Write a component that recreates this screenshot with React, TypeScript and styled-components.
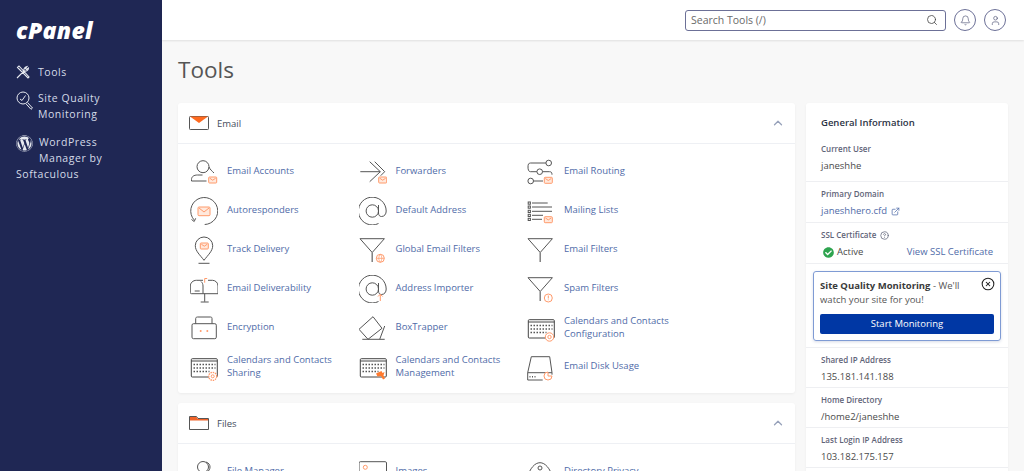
import React from 'react';
import styled, { createGlobalStyle } from 'styled-components';
import { Search, Bell, User, ChevronUp, ExternalLink, CircleHelp, CircleX } from 'lucide-react';
import { FaWordpress, FaCheckCircle } from 'react-icons/fa';

const Global = createGlobalStyle`
  html, body { margin: 0; padding: 0; height: 471px; overflow: hidden; }
  body { font-family: "Open Sans", "Liberation Sans", sans-serif; background: #f8f8f8; }
  * { box-sizing: border-box; }
`;

const Shell = styled.div`
  display: flex;
  width: 1024px;
  height: 471px;
  overflow: hidden;
`;

const Sidebar = styled.aside`
  flex: 0 0 162px;
  background: #1f2754;
  padding: 17px 16px 0;
  color: #d5dbe8;
`;

const Logo = styled.div`
  color: #fff;
  font-style: italic;
  font-weight: 800;
  font-size: 23px;
  line-height: 26px;
  letter-spacing: 0.3px;
  margin-bottom: 21px;
`;

const NavItem = styled.div<{ $gap: number }>`
  font-size: 10.5px;
  line-height: 16.2px;
  letter-spacing: 0.55px;
  margin-bottom: ${p => p.$gap}px;
  &::after { content: ""; display: block; clear: both; }
`;

const NavIcon = styled.span<{ $w: number; $h: number }>`
  float: left;
  width: ${p => p.$w}px;
  height: ${p => p.$h}px;
  padding-top: 1px;
  color: #e6e9f0;
  svg { display: block; }
`;

const Content = styled.div`
  flex: 1;
  min-width: 0;
`;

const TopBar = styled.header`
  height: 40px;
  background: #fff;
  box-shadow: 0 1px 2px rgba(0, 0, 0, 0.1);
  display: flex;
  align-items: center;
  justify-content: flex-end;
  padding-right: 18px;
  gap: 8px;
`;

const SearchBox = styled.div`
  width: 261px;
  height: 21px;
  border: 1px solid #6c7097;
  border-radius: 3px;
  display: flex;
  align-items: center;
  justify-content: space-between;
  padding: 0 7px 0 5px;
  font-size: 10.5px;
  color: #6a6a6a;
  svg { color: #444; }
`;

const RoundButton = styled.div`
  width: 22px;
  height: 22px;
  border: 1px solid #6c7097;
  border-radius: 50%;
  display: flex;
  align-items: center;
  justify-content: center;
  color: #4a4f70;
`;

const PageTitle = styled.h1`
  margin: 0;
  padding: 13px 0 0 16px;
  height: 63px;
  font-size: 22.5px;
  line-height: 34px;
  font-weight: 400;
  color: #555;
`;

const Columns = styled.div`
  display: grid;
  grid-template-columns: 617px 202px;
  column-gap: 11px;
  padding-left: 16px;
`;

const Stack = styled.div`
  display: flex;
  flex-direction: column;
  gap: 10px;
`;

const Card = styled.section`
  background: #fff;
  border-radius: 3px;
  box-shadow: 0 1px 3px rgba(0, 0, 0, 0.05);
`;

const SectionHead = styled.div`
  height: 41px;
  border-bottom: 1px solid #eef0f4;
  display: flex;
  align-items: center;
  padding: 0 10px 0 11px;
  gap: 8px;
  font-size: 9.5px;
  color: #444c5c;
  svg:last-child { margin-left: auto; color: #97a1ba; }
`;

const ToolGrid = styled.div`
  display: grid;
  grid-template-columns: repeat(3, 168.5px);
  grid-auto-rows: 39px;
  padding: 8px 0 7px 12px;
`;

const Tool = styled.a`
  display: flex;
  align-items: center;
  gap: 9px;
  font-size: 9.5px;
  line-height: 12.5px;
  color: #4f6ba8;
  padding-right: 12px;
  svg { flex: 0 0 28px; }
`;

const InfoCard = styled(Card)`
  height: 400px;
`;

const InfoTitle = styled.h2`
  margin: 0;
  padding: 13px 15px 0;
  height: 34px;
  font-size: 9.5px;
  line-height: 14px;
  font-weight: 600;
  color: #2c3345;
`;

const InfoRow = styled.div<{ $h: number }>`
  height: ${p => p.$h}px;
  padding: 0 15px;
  border-bottom: 1.5px solid #eeeff2;
`;

const Label = styled.div`
  display: flex;
  align-items: center;
  gap: 4px;
  font-size: 8px;
  line-height: 12px;
  font-weight: 600;
  color: #5f6478;
  padding-top: 6px;
`;

const Value = styled.div`
  display: flex;
  align-items: center;
  gap: 4px;
  font-size: 9.5px;
  line-height: 14px;
  margin-top: 4px;
  color: #4a4a4a;
`;

const DomainLink = styled(Value)`
  color: #4f6ba8;
`;

const SslLine = styled(Value)`
  justify-content: space-between;
  padding-left: 2px;
  a { color: #4f6ba8; }
  span { display: flex; align-items: center; gap: 3px; }
  svg { color: #2ea44f; }
`;

const PromoWrap = styled.div`
  padding: 7px;
  height: 84px;
  border-bottom: 1.5px solid #eeeff2;
`;

const Promo = styled.div`
  position: relative;
  border: 1px solid #7f9bd4;
  border-radius: 3px;
  height: 70px;
  padding: 7px 6px;
  font-size: 9.5px;
  line-height: 14px;
  color: #555;
  box-shadow: 0 1px 3px rgba(60, 80, 140, 0.2);
  b { font-weight: 700; color: #3a3a3a; }
`;

const CloseIcon = styled.span`
  position: absolute;
  top: 5px;
  right: 5px;
  color: #222;
  line-height: 0;
`;

const PromoButton = styled.div`
  margin-top: 7px;
  height: 20px;
  background: #0037a4;
  border-radius: 2px;
  color: #fff;
  font-size: 9.5px;
  line-height: 20px;
  text-align: center;
`;

const G = '#555';
const O = '#ff9a6b';

const Svg = ({ children }: { children: React.ReactNode }) => (
  <svg width="28" height="28" viewBox="0 0 28 28" fill="none" stroke={G} strokeWidth="1">
    {children}
  </svg>
);

const MiniMail = ({ x, y }: { x: number; y: number }) => (
  <g stroke={O}>
    <rect x={x} y={y} width="8" height="6" rx="0.8" fill="#ffe9dd" />
    <path d={`M${x + 1} ${y + 1.2}l3 2 3-2`} />
  </g>
);

const At = ({ children }: { children?: React.ReactNode }) => (
  <Svg>
    <circle cx="13.3" cy="14" r="6.2" />
    <path d="M19.5 8v8c0 2 1 3.500 3 3.500 3 0 4.700-2.500 4.700-5.500A13.900 13.900 0 1 0 19.500 26.500" />
    {children}
  </Svg>
);

const Funnel = ({ children }: { children?: React.ReactNode }) => (
  <Svg>
    <path d="M1 2.700h24.400L13.200 16.500z" />
    <path d="M13.200 16.500v9.500" strokeWidth="1.400" stroke="#777" />
    {children}
  </Svg>
);

const Calendar = ({ children }: { children?: React.ReactNode }) => (
  <Svg>
    <rect x="1.300" y="5.700" width="26" height="18.300" rx="1" stroke="#444" />
    <path d="M1.300 8h26" stroke="#444" />
    <path d="M3.500 11.500h22M3.500 15h22M3.500 18.500h16" stroke="#555" strokeWidth="1.600" strokeDasharray="1.500 1.500" />
    {children}
  </Svg>
);

const icons: Record<string, React.ReactNode> = {
  accounts: (
    <Svg>
      <circle cx="13" cy="8.700" r="6" />
      <path d="M1.500 23v-1.500c0-3 2.500-4.500 6-4.500h5M19 9c1 2.500 3 4 5 6" />
      <path d="M1.500 23h15" />
      <MiniMail x={18.700} y={19} />
    </Svg>
  ),
  forwarders: (
    <Svg>
      <path d="M1.300 13.700h20M10.700 3.700l10.600 10-10.600 10M15.700 3.700l10 10-4 4" />
      <MiniMail x={19.700} y={19} />
    </Svg>
  ),
  routing: (
    <Svg>
      <circle cx="21.700" cy="5" r="2.800" />
      <circle cx="12.700" cy="13.700" r="2.800" />
      <circle cx="3.700" cy="23" r="2.800" />
      <path d="M18.900 5H3.500C1.500 5 1 6.500 1 9s.5 4.700 2.500 4.700h6.400M15.500 13.700h7c1.500 0 2.500.5 2.500 3M6.500 23h9.500" />
      <MiniMail x={17.300} y={19.300} />
    </Svg>
  ),
  lists: (
    <Svg>
      {[6, 10, 14.300, 18.300, 22.300].map(y => <rect key={y} x="1.200" y={y - 1} width="2.200" height="2.200" />)}
      <path d="M5 6h15.700M5 10h20M5 14.300h20M5 18.300h11M5 22.300h10" />
      <MiniMail x={17.300} y={19.700} />
    </Svg>
  ),
  auto: (
    <Svg>
      <path d="M14.700 27.500A13.500 13.500 0 1 0 4 22.800M1.500 22.500l2.700 2 1.500-3.200" />
      <g stroke={O}>
        <rect x="8" y="10" width="12" height="8.700" rx="1" fill="#ffe9dd" />
        <path d="M9 11l5 4 5-4" />
      </g>
    </Svg>
  ),
  address: <At />,
  track: (
    <Svg>
      <path d="M14 24.300C10 19 5.300 15 5.300 9.700a8.700 8.700 0 0 1 17.400 0C22.700 15 18 19 14 24.300z" />
      <path d="M8.500 27.300h11" />
      <MiniMail x={10.300} y={7} />
    </Svg>
  ),
  globalFilter: (
    <Funnel>
      <g stroke={O}>
        <circle cx="21.300" cy="22.300" r="4" />
        <path d="M17.300 22.300h8M21.300 18.300c-2 2.500-2 5.500 0 8M21.300 18.300c2 2.500 2 5.500 0 8" strokeWidth="0.800" />
      </g>
    </Funnel>
  ),
  filter: <Funnel />,
  deliver: (
    <Svg>
      <path d="M13 18.700H1.500c-.8 0-1.200-.4-1.200-1.200V11c0-3 2.500-5.700 6.200-5.700H13M13 18.700V11c0-2-.8-3.500-2-4.500M18 5.300h4.500c3 0 5.500 2.500 5.500 5.700v7.700H13" />
      <path d="M4.700 16h5M14.700 18.700v8M10.700 27h8" />
      <path d="M14.700 7.700V3.500h2.500" stroke={O} />
    </Svg>
  ),
  importer: (
    <At>
      <path d="M21.300 26v-6.500M19 21.500l2.300-2.300 2.300 2.300" stroke={O} />
    </At>
  ),
  spam: (
    <Funnel>
      <g stroke={O}>
        <circle cx="21.300" cy="23" r="4" />
        <path d="M21.300 20.500v3M21.300 24.500v.7" />
      </g>
    </Funnel>
  ),
  encrypt: (
    <Svg>
      <rect x="2" y="9.700" width="24.300" height="15" rx="1.500" />
      <path d="M5.700 9.700V4.500C5.700 3.500 6.500 3 7.500 3h13c1 0 1.500.5 1.500 1.500v5.200" />
      <circle cx="10.700" cy="17" r="1" fill={O} stroke="none" />
      <circle cx="17.300" cy="17" r="1" fill={O} stroke="none" />
    </Svg>
  ),
  trapper: (
    <Svg>
      <path d="M0 15.300L14 2.700l9 11.600-14 11z" />
      <path d="M3.300 25.300h22.400M25.700 12l-5 13.300" />
    </Svg>
  ),
  calConfig: (
    <Calendar>
      <circle cx="22.500" cy="23" r="4.200" fill="#fff" stroke={O} />
      <circle cx="22.500" cy="23" r="1.700" stroke={O} />
    </Calendar>
  ),
  calShare: (
    <Calendar>
      <circle cx="22.700" cy="23.300" r="4" fill="#fff" stroke={O} strokeDasharray="1.500 0.800" strokeWidth="1.300" />
      <circle cx="22.700" cy="23.300" r="1.500" stroke={O} />
    </Calendar>
  ),
  calManage: (
    <Calendar>
      <path d="M17 20.500l5.500-2.500 1 2 2-1-1 3.500 1.500 3-2 1-2-3.500-3.500.5z" fill="#ff7a2e" stroke="none" />
    </Calendar>
  ),
  disk: (
    <Svg>
      <path d="M4.300 3.700h18.400l2.300 16H.7zM.7 19.700V27h15M25 19.700v2" />
      <path d="M3 24.500v-1.500M5.500 24.500v-1.500M8 24.500v-1.500" />
      <g stroke={O}>
        <path d="M21 19a4 4 0 1 0 4 4h-4z" fill="#fff" />
      </g>
    </Svg>
  ),
  fileManager: (
    <Svg>
      <circle cx="13" cy="9" r="5.500" />
      <path d="M16 4c3 1 4 3 4 5s-1 4-3 5" />
    </Svg>
  ),
  images: (
    <Svg>
      <path d="M0 27V5c0-.8.5-1.300 1.300-1.300h25c.7 0 1.200.5 1.200 1.300v22" />
      <circle cx="6.300" cy="9.300" r="2" stroke={O} />
    </Svg>
  ),
  privacy: (
    <Svg>
      <path d="M0 20C3 10 8 4.700 13 4.700S23 10 26 20" />
      <circle cx="13" cy="10" r="2" />
    </Svg>
  ),
};

const emailTools = [
  ['accounts', 'Email Accounts'], ['forwarders', 'Forwarders'], ['routing', 'Email Routing'],
  ['auto', 'Autoresponders'], ['address', 'Default Address'], ['lists', 'Mailing Lists'],
  ['track', 'Track Delivery'], ['globalFilter', 'Global Email Filters'], ['filter', 'Email Filters'],
  ['deliver', 'Email Deliverability'], ['importer', 'Address Importer'], ['spam', 'Spam Filters'],
  ['encrypt', 'Encryption'], ['trapper', 'BoxTrapper'], ['calConfig', 'Calendars and Contacts Configuration'],
  ['calShare', 'Calendars and Contacts Sharing'], ['calManage', 'Calendars and Contacts Management'], ['disk', 'Email Disk Usage'],
];

const fileTools = [['fileManager', 'File Manager'], ['images', 'Images'], ['privacy', 'Directory Privacy']];

const EmailIcon = () => (
  <svg width="20" height="16" viewBox="0 0 20 16" fill="none">
    <rect x="0.500" y="1.500" width="19" height="13" rx="0.800" stroke="#555" />
    <path d="M1 1.500h18L10 8z" fill="#ff6a1f" />
  </svg>
);

const FolderIcon = () => (
  <svg width="20" height="16" viewBox="0 0 20 16" fill="none">
    <path d="M.5 14.500V1.500h7l1.500 2h10.500v11z" stroke="#555" fill="#fff" />
    <path d="M1 2h6.500L9 4h10v1.500H1z" fill="#f0642a" />
  </svg>
);

const ToolsIcon = () => (
  <svg width="14" height="14" viewBox="0 0 14 14" fill="none" stroke="currentColor" strokeWidth="1.100">
    <path d="M1 13L8 6M8 6c-.5-2 .5-4 3-4.500L9.500 3.500l1 1L12.500 3c0 2.500-2 3.500-4.500 3zM1.500 2.500L3 1l10 11-1 1z" />
  </svg>
);

const QualityIcon = () => (
  <svg width="18" height="19" viewBox="0 0 18 19" fill="none" stroke="currentColor" strokeWidth="1">
    <circle cx="7" cy="7" r="6" />
    <path d="M4 8l2 1.500L9.500 4.500M11.500 11.500l5 5.500-1.500 1.300-5-5.500" />
  </svg>
);

const ToolList = ({ items }: { items: string[][] }) => (
  <ToolGrid>
    {items.map(([icon, label]) => (
      <Tool key={label}>
        {icons[icon]}
        <span>{label}</span>
      </Tool>
    ))}
  </ToolGrid>
);

export default function App() {
  return (
    <Shell>
      <Global />
      <Sidebar>
        <Logo>cPanel</Logo>
        <NavItem $gap={9.800}>
          <NavIcon $w={22} $h={16}><ToolsIcon /></NavIcon>
          Tools
        </NavItem>
        <NavItem $gap={11.600}>
          <NavIcon $w={22} $h={30}><QualityIcon /></NavIcon>
          Site Quality Monitoring
        </NavItem>
        <NavItem $gap={0}>
          <NavIcon $w={23} $h={30}><FaWordpress size={17} /></NavIcon>
          WordPress Manager by Softaculous
        </NavItem>
      </Sidebar>
      <Content>
        <TopBar>
          <SearchBox>
            Search Tools (/)
            <Search size={12} strokeWidth={1.6} />
          </SearchBox>
          <RoundButton><Bell size={11} strokeWidth={1.4} /></RoundButton>
          <RoundButton><User size={11} strokeWidth={1.4} /></RoundButton>
        </TopBar>
        <PageTitle>Tools</PageTitle>
        <Columns>
          <Stack>
            <Card>
              <SectionHead>
                <EmailIcon />
                Email
                <ChevronUp size={14} strokeWidth={2.2} />
              </SectionHead>
              <ToolList items={emailTools} />
            </Card>
            <Card>
              <SectionHead>
                <FolderIcon />
                Files
                <ChevronUp size={14} strokeWidth={2.2} />
              </SectionHead>
              <ToolList items={fileTools} />
            </Card>
          </Stack>
          <InfoCard>
            <InfoTitle>General Information</InfoTitle>
            <InfoRow $h={45}>
              <Label>Current User</Label>
              <Value>janeshhe</Value>
            </InfoRow>
            <InfoRow $h={41}>
              <Label>Primary Domain</Label>
              <DomainLink>janeshhero.cfd <ExternalLink size={9} /></DomainLink>
            </InfoRow>
            <InfoRow $h={41}>
              <Label>SSL Certificate <CircleHelp size={9} /></Label>
              <SslLine>
                <span><FaCheckCircle size={11} /> Active</span>
                <a>View SSL Certificate</a>
              </SslLine>
            </InfoRow>
            <PromoWrap>
              <Promo>
                <b>Site Quality Monitoring</b> - We'll<br />watch your site for you!
                <CloseIcon><CircleX size={14} strokeWidth={1.8} /></CloseIcon>
                <PromoButton>Start Monitoring</PromoButton>
              </Promo>
            </PromoWrap>
            <InfoRow $h={39.500}>
              <Label>Shared IP Address</Label>
              <Value>135.181.141.188</Value>
            </InfoRow>
            <InfoRow $h={40}>
              <Label>Home Directory</Label>
              <Value>/home2/janeshhe</Value>
            </InfoRow>
            <InfoRow $h={40}>
              <Label>Last Login IP Address</Label>
              <Value>103.182.175.157</Value>
            </InfoRow>
          </InfoCard>
        </Columns>
      </Content>
    </Shell>
  );
}
